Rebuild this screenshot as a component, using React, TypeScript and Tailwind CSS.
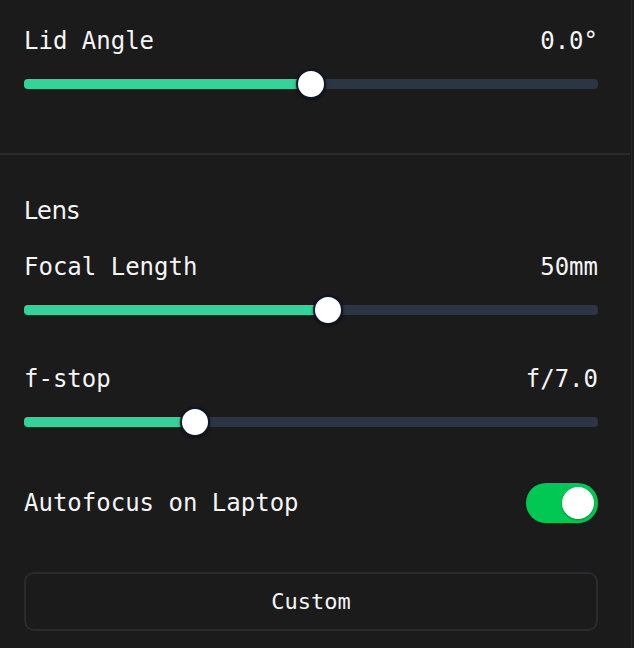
import { useState } from "react";

const mono = "font-['DejaVu_Sans_Mono',monospace]";

function Slider({ label, value, pct }: { label: string; value: string; pct: number }) {
  return (
    <div className="flex flex-col">
      <div className={`flex h-8 items-center justify-between text-[24px] leading-8 text-[#f5f5f5] ${mono}`}>
        <span>{label}</span>
        <span>{value}</span>
      </div>
      {/* track + thumb */}
      <div className="relative mt-3 flex h-[30px] items-center">
        <div className="flex h-[10px] w-full overflow-hidden rounded-[4px] bg-[#2c3543]">
          <div className="h-full bg-[#34d399]" style={{ width: `${pct}%` }} />
        </div>
        <div
          className="absolute top-0 h-[30px] w-[30px] -translate-x-1/2 rounded-full border-2 border-[#0f1629] bg-white shadow-[0_1px_3px_rgba(0,0,0,0.5)]"
          style={{ left: `${pct}%` }}
        />
      </div>
    </div>
  );
}

export default function App() {
  const [autofocus, setAutofocus] = useState(true);

  return (
    <div className="flex min-h-[648px] w-[634px] bg-[#1b1b1b]">
      <div className="flex w-[632px] flex-col border-r border-[#242424]">
        <section className="pt-[25px] pr-[33px] pb-[54px] pl-6">
          <Slider label="Lid Angle" value="0.0°" pct={50} />
        </section>

        <div className="h-[2px] w-[630px] bg-[#2a2a2a]" />

        <section className="flex flex-col pt-10 pr-[33px] pl-6">
          <h2 className="text-[24px] leading-8 text-[#f5f5f5] font-['DejaVu_Sans',sans-serif]">Lens</h2>

          <div className="mt-6">
            <Slider label="Focal Length" value="50mm" pct={53} />
          </div>

          <div className="mt-[38px]">
            <Slider label="f-stop" value="f/7.0" pct={29.8} />
          </div>

          <div className="mt-[46px] flex h-10 items-center justify-between">
            <span className={`text-[24px] leading-8 text-[#f5f5f5] ${mono}`}>Autofocus on Laptop</span>
            <button
              onClick={() => setAutofocus(!autofocus)}
              className={`flex h-10 w-[72px] items-center rounded-full px-1 ${
                autofocus ? "justify-end bg-[#00c853]" : "justify-start bg-[#3a3a3a]"
              }`}
            >
              <span className="h-8 w-8 rounded-full bg-white shadow-[0_1px_2px_rgba(0,0,0,0.3)]" />
            </button>
          </div>

          <button
            className={`mt-[49px] flex h-[59px] w-full items-center justify-center rounded-[10px] border-2 border-[#2a2a2f] text-[22px] text-[#f5f5f5] ${mono}`}
          >
            Custom
          </button>
        </section>
      </div>
    </div>
  );
}
